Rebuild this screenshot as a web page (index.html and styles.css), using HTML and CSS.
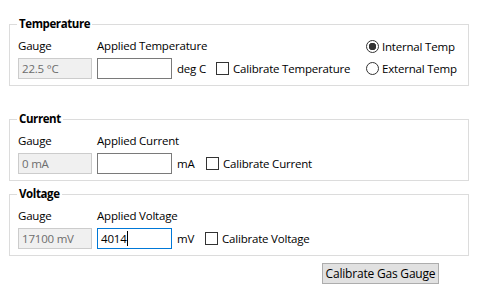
FILE: index.html
```html
<!DOCTYPE html>
<html lang="en">
<head>
  <meta charset="UTF-8" />
  <meta name="viewport" content="width=device-width, initial-scale=1.0"/>
  <title>Gas Gauge Calibration</title>
  <link rel="stylesheet" href="styles.css">
</head>
<body>
  <div class="panel">
    <fieldset class="group group-temp">
      <legend>Temperature</legend>
      <div class="group-body">
        <div class="fields">
          <div class="row labels">
            <span class="col-gauge">Gauge</span>
            <span>Applied Temperature</span>
          </div>
          <div class="row controls">
            <span class="box readout">22.5 °C</span>
            <span class="box entry"></span>
            <span class="unit unit-temp">deg C</span>
            <label class="check"><input type="checkbox">Calibrate Temperature</label>
          </div>
        </div>
        <div class="options">
          <label class="radio radio-top"><input type="radio" name="source" checked>Internal Temp</label>
          <label class="radio radio-bottom"><input type="radio" name="source">External Temp</label>
        </div>
      </div>
    </fieldset>

    <fieldset class="group group-current">
      <legend>Current</legend>
      <div class="group-body">
        <div class="fields">
          <div class="row labels">
            <span class="col-gauge">Gauge</span>
            <span>Applied Current</span>
          </div>
          <div class="row controls">
            <span class="box readout">0 mA</span>
            <span class="box entry"></span>
            <span class="unit unit-current">mA</span>
            <label class="check"><input type="checkbox">Calibrate Current</label>
          </div>
        </div>
      </div>
    </fieldset>

    <fieldset class="group group-voltage">
      <legend>Voltage</legend>
      <div class="group-body">
        <div class="fields">
          <div class="row labels">
            <span class="col-gauge">Gauge</span>
            <span>Applied Voltage</span>
          </div>
          <div class="row controls">
            <span class="box readout">17100 mV</span>
            <span class="box entry focused">4014<span class="caret"></span></span>
            <span class="unit unit-voltage">mV</span>
            <label class="check"><input type="checkbox">Calibrate Voltage</label>
          </div>
        </div>
      </div>
    </fieldset>

    <div class="actions">
      <button type="button">Calibrate Gas Gauge</button>
    </div>
  </div>
</body>
</html>
```

FILE: styles.css
```css
body {
  margin: 0;
  background: #fff;
  color: #000;
  font-family: 'Segoe UI', 'Open Sans', sans-serif;
  font-size: 11.5px;
  letter-spacing: -0.2px;
}
.panel {
  padding: 16px 0 0 9px;
  width: 460px;
}
.group {
  box-sizing: border-box;
  width: 460px;
  min-width: 0;
  margin: 0;
  padding: 0 8px 6px;
  border: 1px solid #dcdcdc;
}
.group legend {
  font-size: 11.5px;
  font-weight: bold;
  letter-spacing: -0.4px;
  line-height: 16px;
  padding: 0 2px;
  margin-left: -1px;
}
.group-temp {
  margin-bottom: 25px;
}
.group-current {
  margin-bottom: 5px;
}
.group-voltage {
  margin-bottom: 7px;
}
.group-body {
  display: flex;
  padding-top: 6px;
}
.fields {
  flex: 0 0 348px;
}
.row {
  display: flex;
  align-items: center;
  white-space: nowrap;
}
.labels {
  height: 16px;
  line-height: 16px;
  margin-bottom: 4px;
}
.controls {
  height: 21px;
}
.col-gauge {
  width: 79px;
}
.box {
  box-sizing: border-box;
  display: flex;
  align-items: center;
  height: 21px;
  padding: 0 3px;
  margin-right: 5px;
  border: 1px solid;
}
.readout {
  width: 74px;
  background: #f0f0f0;
  border-color: #cccccc;
  color: #6d6d6d;
}
.entry {
  width: 75px;
  background: #fff;
  border-color: #7a7a7a;
}
.entry.focused {
  border-color: #0078d7;
}
.caret {
  width: 1px;
  height: 15px;
  background: #000;
}
.unit-temp {
  width: 39px;
}
.unit-current {
  width: 29px;
}
.unit-voltage {
  width: 28px;
}
.check, .radio {
  display: flex;
  align-items: center;
  white-space: nowrap;
}
.check input {
  appearance: none;
  box-sizing: border-box;
  width: 13px;
  height: 13px;
  margin: 0 4px 0 0;
  border: 1px solid #333;
  background: #fff;
}
.options {
  display: flex;
  flex-direction: column;
  flex-shrink: 0;
}
.radio-top {
  height: 16px;
  margin-bottom: 4px;
}
.radio-bottom {
  height: 21px;
}
.radio input {
  appearance: none;
  box-sizing: border-box;
  width: 13px;
  height: 13px;
  margin: 0 3px 0 0;
  border: 1px solid #333;
  border-radius: 50%;
  background: #fff;
}
.radio input:checked {
  background: radial-gradient(circle, #333 0 3.5px, #fff 4px);
}
.actions {
  display: flex;
  padding-left: 313px;
}
.actions button {
  width: 117px;
  height: 21px;
  padding: 0;
  margin: 0;
  border: 1px solid #adadad;
  background: #e1e1e1;
  color: #000;
  font: inherit;
  font-size: 12px;
  letter-spacing: -0.2px;
}
```
